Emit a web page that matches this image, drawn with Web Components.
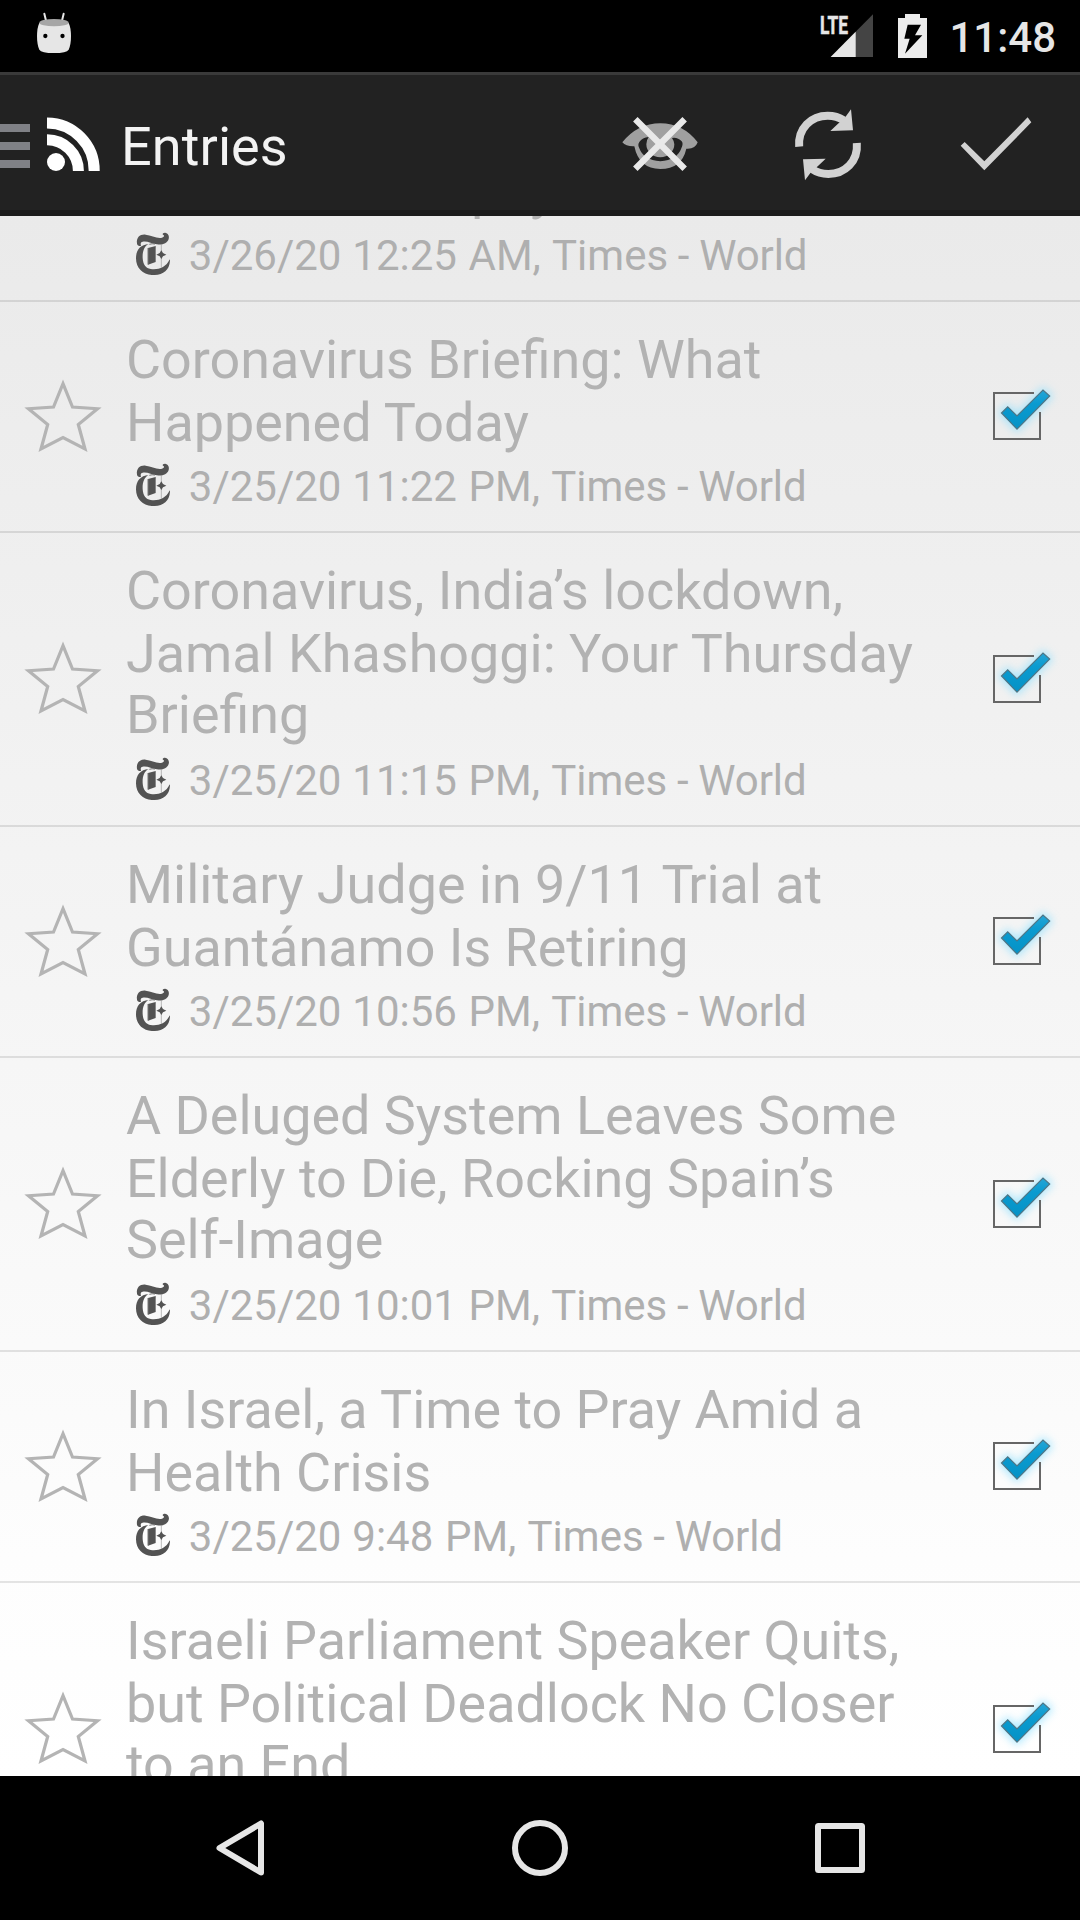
<!DOCTYPE html>
<html lang="en">
<head>
<meta charset="utf-8">
<title>Entries</title>
<style>
html,body{margin:0;height:1920px;overflow:hidden;background:#000}
body{font-family:Roboto,sans-serif}
</style>
</head>
<body>
<reader-app></reader-app>
<script>
const define=(name,render)=>customElements.define(name,class extends HTMLElement{
  connectedCallback(){
    if(this.shadowRoot)return;
    this.attachShadow({mode:'open'}).innerHTML=render(this);
  }
});

define('status-bar',()=>`
<style>
:host{display:flex;height:72px;background:#000;justify-content:space-between;box-sizing:border-box;padding:0 24px 0 36px}
svg{display:block}
.right{display:flex}
.signal{margin-right:24px}
.clock{font:500 42px/50px Roboto,sans-serif;color:#e6e6e6;margin:13px 0 0 21px;white-space:nowrap}
</style>
<svg width="36" height="60" viewBox="108 0 108 180">
  <path d="M133 41L139 66M191 41L185 66" stroke="#e6e6e6" stroke-width="6" stroke-linecap="round"/>
  <path d="M118 69Q111 84 111 108Q111 134 118 149Q124 159 162 159Q200 159 206 149Q213 134 213 108Q213 84 206 69Z" fill="#e6e6e6"/>
  <ellipse cx="162" cy="68" rx="44" ry="11" fill="#a6a6a6"/>
  <circle cx="136" cy="108" r="6.5"/><circle cx="187.500" cy="108" r="6.5"/>
</svg>
<div class="right">
  <svg class="signal" width="54" height="60" viewBox="660 0 162 180">
    <path d="M695 171L822 43V171Z" fill="#444"/><path d="M695 171L770 95V171Z" fill="#e6e6e6"/>
    <text x="663" y="101" font-family="Roboto,sans-serif" font-weight="700" font-size="77" fill="#e6e6e6" stroke="#e6e6e6" stroke-width="1.500" textLength="84" lengthAdjust="spacingAndGlyphs">LTE</text>
  </svg>
  <svg width="31" height="60" viewBox="894 0 93 180">
    <path d="M897 54H918V42H963V54H984V174H897Z" fill="#ececec"/>
    <path d="M926 74H966L948 106H970L918 161L932 116H916Z" fill="#000"/>
  </svg>
  <span class="clock">11:48</span>
</div>`);

define('action-bar',()=>`
<style>
:host{display:flex;height:144px;box-sizing:border-box;border-top:3px solid #3a3a3a;border-bottom:6px solid #1b1b1b;background:#222;align-items:flex-start}
svg{display:block;flex:none}
.title{font-size:54px;line-height:64px;color:#f3f3f3;letter-spacing:.1px;margin:40px 0 0 20px;flex:1;white-space:nowrap}
.sync{margin-left:93px}.done{margin:0 48px 0 95px}
</style>
<svg width="101" height="135" viewBox="0 75 101 135">
  <path d="M0 124H30V132H0ZM0 142H30V150H0ZM0 160H30V168H0Z" fill="#808186"/>
  <circle cx="56" cy="162" r="9" fill="#fff"/>
  <path d="M47 139.800A31.300 31.300 0 0 1 78.400 171M47 123A47.500 47.500 0 0 1 94.200 171" fill="none" stroke="#fff" stroke-width="11"/>
</svg>
<span class="title"><slot></slot></span>
<svg width="80" height="135" viewBox="60 225 240 405">
  <path fill-rule="evenodd" fill="#a0a0a0" d="M67 427Q113 370 181 370Q249 370 293 427Q286 448 259 446Q245 507 181 507Q117 507 103 439Q78 440 67 427ZM118 426Q112 434 118 445Q130 480 181 484Q232 480 244 445Q251 430 245 424Q233 411 216 414Q223 424 223 433A42 39 0 0 1 139 433Q139 420 146 411Q127 413 118 426Z"/>
  <path d="M106 358L254 506M254 358L106 506" stroke="#e9e9e9" stroke-width="19"/>
</svg>
<svg class="sync" width="72" height="135" viewBox="580 225 216 405">
  <g><path d="M598.500 440C594 384 635 347 684 347Q712 347 732 361" fill="none" stroke="#d2d2d2" stroke-width="24"/><path d="M754 328L760 391L692 393L715 371L735 354Z" fill="#d2d2d2"/></g>
  <g transform="rotate(180 685 434.500)"><path d="M598.500 440C594 384 635 347 684 347Q712 347 732 361" fill="none" stroke="#d2d2d2" stroke-width="24"/><path d="M754 328L760 391L692 393L715 371L735 354Z" fill="#d2d2d2"/></g>
</svg>
<svg class="done" width="72" height="135" viewBox="1080 225 216 405"><path d="M1082 437L1094 426L1153 484L1283 352L1294 367L1153 511Z" fill="#d2d2d2"/></svg>`);

define('star-toggle',()=>`
<style>:host{display:block;flex:none}svg{display:block}</style>
<svg width="84" height="80" viewBox="21 377.300 84 80"><path d="M63 384L72.500 407.300L97.500 409L78.300 424.800L85 449.300L63 437.800L41 449.300L47.700 424.800L28.500 409L53.500 407.300Z" fill="none" stroke="#b4b4b4" stroke-width="3.200" stroke-miterlimit="12"/></svg>`);

define('read-check',()=>`
<style>:host{display:block;flex:none}svg{display:block}</style>
<svg width="120" height="113" viewBox="0 0 120 113">
<defs><linearGradient id="blue" x2="0" y2="1"><stop stop-color="#25a5d6"/><stop offset=".35" stop-color="#0a9bd0"/><stop offset="1" stop-color="#0592c6"/></linearGradient>
<filter id="glow" x="-40%" y="-40%" width="180%" height="180%"><feGaussianBlur stdDeviation="4.500"/></filter></defs>
<path d="M41.500 53L47.700 46.800L57 56L83 30L89.700 36L57 69.200Z" fill="#8ce0ff" stroke="#8ce0ff" stroke-width="5" opacity=".7" filter="url(#glow)"/>
<path d="M74 33H34V79H80V52" fill="none" stroke="#666" stroke-width="2"/>
<path d="M41.500 53L47.700 46.800L57 56L83 30L89.700 36L57 69.200Z" fill="url(#blue)" stroke="#4f7686" stroke-width="1.200"/>
</svg>`);

define('feed-icon',()=>`
<style>:host{display:block;flex:none}svg{display:block}</style>
<svg width="34" height="43" viewBox="48 49 102 129">
<path fill="#535353" d="M51 84C48 65 61 55 77 57C94 59 112 70 126 66C134 63 133 58 129 57C126 55 129 51 135 51C144 52 149 61 146 70C141 85 126 88 111 86C96 84 80 75 68 78C61 79 62 84 63 91C55 91 52 88 51 84Z"/>
<path fill="#535353" d="M86 85C73 91 67 107 68 127C69 147 78 158 92 160C113 163 138 157 149 131L150 135C148 163 130 177 104 178C73 180 48 161 48 128C48 103 61 87 86 85Z"/>
<path fill="#535353" d="M84 97L107 91V139L84 147Z"/><path d="M84 97V147M88 86Q96 83 105 85" stroke="#777" fill="none" stroke-width="3"/>
<path d="M124 85V157" stroke="#999" stroke-width="2"/><path fill="#535353" d="M124 104L129 112L139 117L129 122L124 130L119 122L109 117L119 112Z"/>
</svg>`);

define('entry-meta',el=>`
<style>
:host{display:flex;flex:none;align-items:flex-start;height:49px;gap:18.800px;font-size:42px;line-height:49px;color:#afafaf;white-space:nowrap}
feed-icon{margin-top:1px}
span span:nth-child(2){margin-left:.4px}
span span:nth-child(3){margin-left:1.200px}
span span:nth-child(4){margin-left:.8px}
span span:nth-child(5){margin-left:-.7px}
span span:nth-child(6){margin-left:-.7px;letter-spacing:-.1px}
</style>
<feed-icon></feed-icon><span>${el.getAttribute('text').split(' ').map(w=>`<span>${w}</span>`).join(' ')}</span>`);

define('entry-row',el=>`
<style>
:host{display:flex;flex:none;align-items:center;box-sizing:border-box;height:231px;border-bottom:2px solid rgba(0,0,0,.1)}
:host([tall]){height:294px}
star-toggle{margin:0 21px}
.body{flex:1;align-self:stretch;display:flex;flex-direction:column;justify-content:space-between;padding:26px 0 20px;min-width:0}
.title{font-size:53.880px;line-height:63px;color:#b2b2b2;white-space:nowrap}
.title>span{display:block}
.title>span:nth-child(3){margin-top:-2px}
.title b{font-weight:inherit;letter-spacing:-5.500px}
entry-meta{margin-left:10px}
read-check{margin-left:-10px}
</style>
<star-toggle></star-toggle>
<div class="body"><div class="title">${el.getAttribute('lines').split('|').map(t=>`<span>${t.replace('Trial','<b>T</b>rial')}</span>`).join('')}</div>
<entry-meta text="${el.getAttribute('meta')}"></entry-meta></div>
<read-check></read-check>`);

define('partial-row',el=>`
<style>
:host{display:flex;flex-direction:column;flex:none;height:86px;box-sizing:border-box;border-bottom:2px solid rgba(0,0,0,.1);padding-left:136px;overflow:hidden}
.tail{font-size:54px;line-height:63px;color:#b2b2b2;margin:-58px 0 0 335px;height:63px;flex:none}
entry-meta{margin-top:10px}
</style>
<div class="tail">pay</div>
<entry-meta text="${el.getAttribute('meta')}"></entry-meta>`);

define('nav-bar',()=>`
<style>:host{display:flex;height:144px;flex:none;background:#000;align-items:center;justify-content:center;gap:240px}svg{display:block}</style>
<svg width="60" height="60" viewBox="210 1818 60 60"><path d="M261 1823.500V1872.500L219.500 1848Z" fill="none" stroke="#e6e6e6" stroke-width="6" stroke-linejoin="round"/></svg>
<svg width="60" height="60" viewBox="510 1818 60 60"><circle cx="540" cy="1848" r="25" fill="none" stroke="#e6e6e6" stroke-width="6"/></svg>
<svg width="60" height="60" viewBox="810 1818 60 60"><rect x="818" y="1826" width="44" height="44" rx=".5" fill="none" stroke="#e6e6e6" stroke-width="6" stroke-linejoin="round"/></svg>`);

define('reader-app',()=>`
<style>
:host{display:flex;flex-direction:column;width:1080px;height:1920px;overflow:hidden}
main{flex:1;min-height:0;overflow:hidden;display:flex;flex-direction:column;background:linear-gradient(#eaeaea,#fdfdfd 86%,#fff)}
</style>
<status-bar></status-bar>
<action-bar>Entries</action-bar>
<main>
<partial-row meta="3/26/20 12:25 AM, Times - World"></partial-row>
<entry-row lines="Coronavirus Briefing: What|Happened Today" meta="3/25/20 11:22 PM, Times - World"></entry-row>
<entry-row tall lines="Coronavirus, India’s lockdown,|Jamal Khashoggi: Your Thursday|Briefing" meta="3/25/20 11:15 PM, Times - World"></entry-row>
<entry-row lines="Military Judge in 9/11 Trial at|Guantánamo Is Retiring" meta="3/25/20 10:56 PM, Times - World"></entry-row>
<entry-row tall lines="A Deluged System Leaves Some|Elderly to Die, Rocking Spain’s|Self-Image" meta="3/25/20 10:01 PM, Times - World"></entry-row>
<entry-row lines="In Israel, a Time to Pray Amid a|Health Crisis" meta="3/25/20 9:48 PM, Times - World"></entry-row>
<entry-row tall lines="Israeli Parliament Speaker Quits,|but Political Deadlock No Closer|to an End" meta=""></entry-row>
</main>
<nav-bar></nav-bar>`);
</script>
</body>
</html>
